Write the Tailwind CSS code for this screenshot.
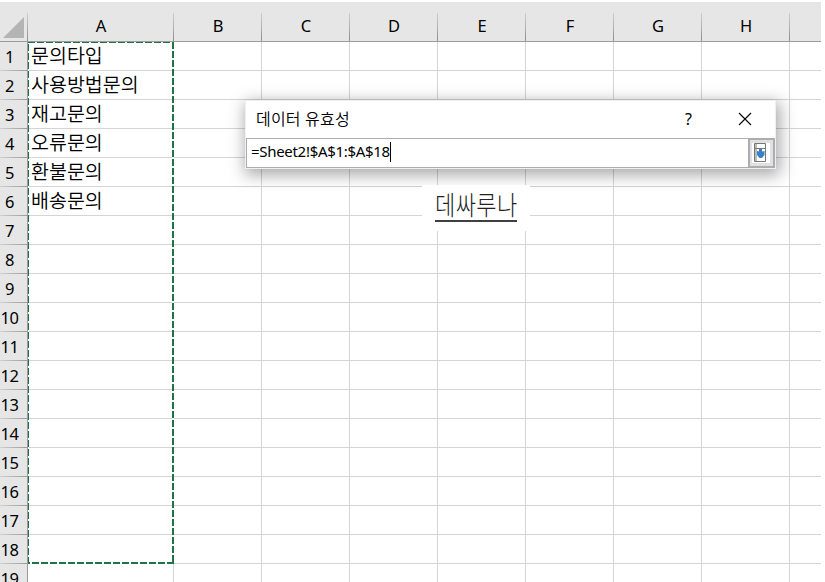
<!DOCTYPE html>
<html lang="ko">
<head>
  <meta charset="UTF-8">
  <title>데이터 유효성</title>
  <script src="https://cdn.jsdelivr.net/npm/@tailwindcss/browser@4"></script>
  <style>
    body {
      font-family: 'Noto Sans', 'Noto Sans CJK KR', sans-serif;
    }
  </style>
</head>
<body class="bg-white text-black">
  <div class="relative w-[825px] h-[582px] overflow-hidden pt-[2px]">

    <!-- Sheet -->
    <div class="w-[821px]">
      <div id="columns" class="flex h-10 bg-[#e6e6e6] border-b border-[#9b9b9b]">
        <div class="w-7 shrink-0 flex items-end justify-end pr-1 pb-[3px] relative">
          <svg class="w-[21px] h-[21px]" viewBox="0 0 21 21"><path d="M21 0V21H0Z" fill="#b4b4b4"/></svg>
          <span class="absolute right-0 bottom-0 w-px h-7 bg-linear-to-b from-[#d0d0d0] to-[#8e8e8e]"></span>
        </div>
      </div>
      <div id="rows"></div>
    </div>

    <!-- Marching ants around A1:A18 -->
    <svg class="absolute left-0 top-0 w-[180px] h-[570px]" viewBox="0 0 180 570" fill="none" stroke="#217346" shape-rendering="crispEdges">
      <path d="M28.5 42V563" stroke="#fff"/>
      <path d="M28 42.5H174" stroke-dasharray="7 2"/>
      <path d="M28.5 44V563" stroke-dasharray="7 2"/>
      <path d="M173 42V563" stroke="#fff" stroke-width="2"/>
      <path d="M173 42V563" stroke-width="2" stroke-dasharray="7 2"/>
      <path d="M28 563H174" stroke="#fff" stroke-width="2"/>
      <path d="M174 563H28" stroke-width="2" stroke-dasharray="7 2"/>
    </svg>

    <!-- Dialog -->
    <div class="absolute left-[245px] top-[100px] w-[531px] h-[69px] bg-white border border-[#f0f0f0] shadow-[2px_4px_15px_2px_rgba(0,0,0,0.34)]">
      <div class="flex items-center h-[37px] pl-[10px] pr-[23px]">
        <h1 class="flex-1 text-[16px] leading-none tracking-[0.2px] font-[350] whitespace-nowrap relative -top-px">데이터 유효성</h1>
        <span class="text-[16px] leading-none mr-[46px] relative -top-px">?</span>
        <svg class="w-[14px] h-[14px] mb-[2px]" viewBox="0 0 14 14" stroke="#000" stroke-width="1.1"><path d="M1 1L13 13M13 1L1 13"/></svg>
      </div>
      <div class="flex h-[30px] border border-[#abadb3]">
        <div class="flex-1 flex items-center pl-1 pb-[3px]">
          <span class="text-[15px] leading-none tracking-[-0.3px]">=Sheet2!$A$1:$A$18</span>
          <span class="w-px h-5 bg-black"></span>
        </div>
        <button class="w-[27px] -my-px -mr-px h-[30px] bg-[#e1e1e1] border-2 border-[#abadb3] flex items-center justify-center pr-px">
          <svg class="w-[18px] h-5 shrink-0" viewBox="0 0 18 20" fill="none">
            <path d="M0 0H18V20H0Z" fill="#fff"/>
            <path d="M2.5 .5H13.5V18.5H2.5ZM4 .5V18.5M2.5 5.5H13.5" stroke="#777"/>
            <path d="M7 6H10V8.500L12.500 8V12L10 15H7.500L5 12V8L7 8.500Z" fill="#3b7fc4"/>
          </svg>
        </button>
      </div>
    </div>

    <!-- Signature -->
    <div class="absolute left-[422px] top-[185px] w-[108px] h-[46px] bg-white">
      <div class="absolute left-[13px] top-[5px] w-[82px] h-8 border-b-2 border-[#404040]">
        <span class="block origin-top-left scale-y-[1.2] text-[22px] leading-[24px] font-light tracking-[0.4px] text-[#222] whitespace-nowrap">데싸루나</span>
      </div>
    </div>
  </div>

  <script>
    const columns = ['A', 'B', 'C', 'D', 'E', 'F', 'G', 'H', ''];
    const values = ['문의타입', '사용방법문의', '재고문의', '오류문의', '환불문의', '배송문의'];
    const width = (i) => i === 0 ? 'w-[146px]' : i === 8 ? 'w-[31px]' : 'w-[88px]';

    document.getElementById('columns').innerHTML += columns.map((name, i) => `
      <div class="${width(i)} shrink-0 relative flex items-center justify-center pt-[10px] text-[16.5px] leading-none">
        ${name}
        ${i < 8 ? '<span class="absolute right-0 bottom-0 w-px h-7 bg-linear-to-b from-[#d0d0d0] to-[#8e8e8e]"></span>' : ''}
      </div>`).join('');

    for (let r = 1; r <= 19; r++) {
      const cells = columns.map((name, i) => `
        <div class="${width(i)} shrink-0 border-b border-[#d4d4d4] ${i < 8 ? 'border-r' : ''} pl-[3px] text-[19.5px] leading-[28px] font-[350] whitespace-nowrap">${i === 0 ? values[r - 1] || '' : ''}</div>`).join('');
      document.getElementById('rows').innerHTML += `
        <div class="flex h-[29px]">
          <div class="w-7 shrink-0 relative bg-[#e6e6e6] border-r border-[#9b9b9b] flex items-center justify-center pr-2 pt-[2px] text-[16.5px] leading-none tracking-[-0.4px]">
            ${r}
            <span class="absolute left-0 bottom-0 w-full h-px bg-linear-to-r from-[#cfcfcf] to-[#9b9b9b]"></span>
          </div>${cells}
        </div>`;
    }
  </script>
</body>
</html>
